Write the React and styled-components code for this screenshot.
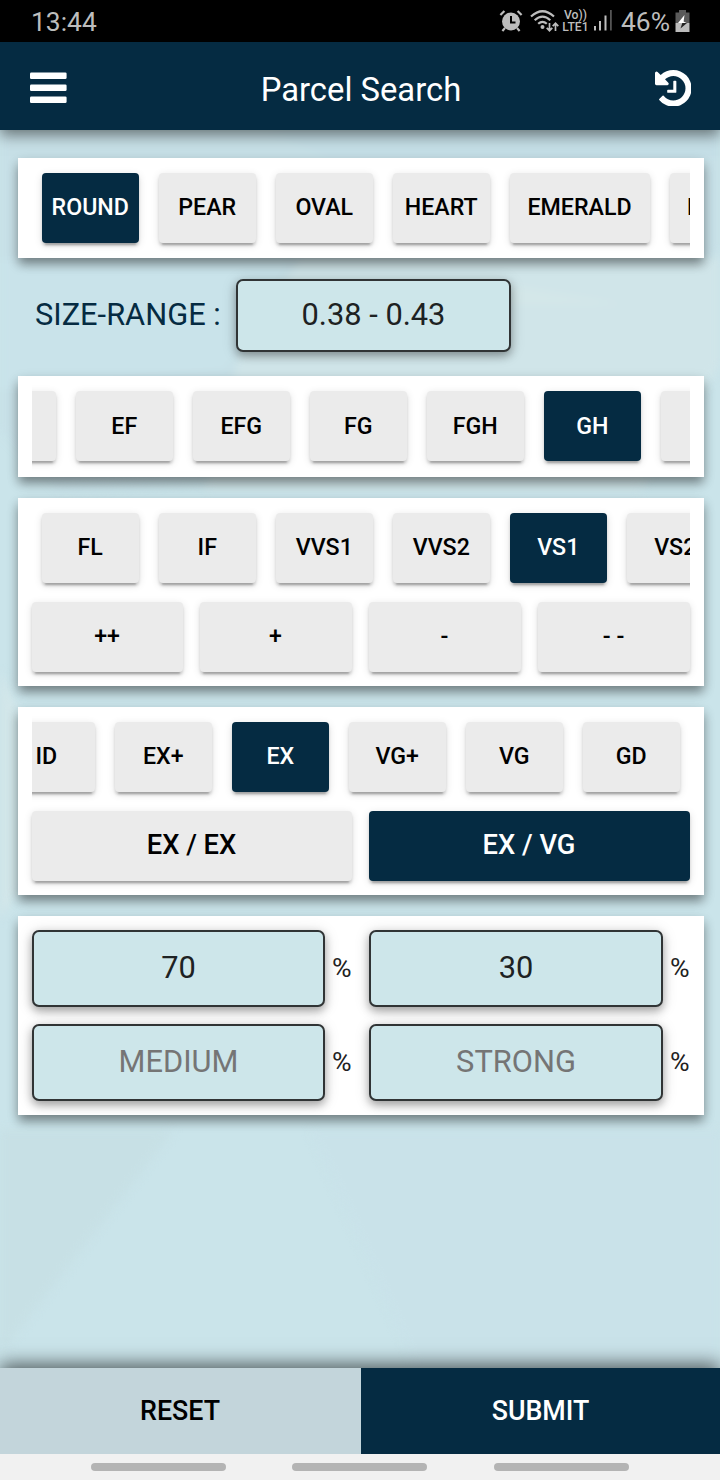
import React, { useState } from "react";
import styled, { createGlobalStyle } from "styled-components";

const NAVY = "#052b42";

const SHAPES = ["ROUND", "PEAR", "OVAL", "HEART", "EMERALD", "PRINCESS"];
const COLORS = ["", "EF", "EFG", "FG", "FGH", "GH", ""];
const CLARITIES = ["FL", "IF", "VVS1", "VVS2", "VS1", "VS2"];
const SHADES = ["++", "+", "-", "- -"];
const CUTS = ["ID", "EX+", "EX", "VG+", "VG", "GD"];
const FINISHES = ["EX / EX", "EX / VG"];

function ChipRow({ items, value, onSelect, shift = 10, drop = 2 }) {
  return (
    <Scroller $shift={shift}>
      {items.map((item, i) => (
        <Chip
          key={i}
          $wide={item.length > 5}
          $drop={drop}
          $active={item !== "" && item === value}
          onClick={() => onSelect(item)}
        >
          {item}
        </Chip>
      ))}
    </Scroller>
  );
}

function ButtonGrid({ items, value, onSelect, columns, large }) {
  return (
    <Grid $columns={columns}>
      {items.map((item) => (
        <WideButton
          key={item}
          $large={large}
          $active={item === value}
          onClick={() => onSelect(item)}
        >
          {item}
        </WideButton>
      ))}
    </Grid>
  );
}

function PercentField({ placeholder, defaultValue }) {
  return (
    <Field>
      <Input placeholder={placeholder} defaultValue={defaultValue} />
      <Percent>%</Percent>
    </Field>
  );
}

function StatusBar() {
  return (
    <Status>
      <Clock>13:44</Clock>
      <StatusIcons>
        <svg width="24" height="24" viewBox="0 0 24 24">
          <circle cx="12" cy="12.5" r="9" fill="#bdbdbd" />
          <path
            d="M1.4 6 5.4 2M22.6 6 18.600 2M6 19 3.400 22M18 19l2.600 3"
            stroke="#bdbdbd"
            strokeWidth="2.200"
            fill="none"
          />
          <path
            d="M12 7v6.500h4.500"
            stroke="#000"
            strokeWidth="2"
            fill="none"
          />
        </svg>
        <WifiIcon width="30" height="24" viewBox="0 0 30 24">
          <g fill="none" stroke="#bdbdbd" strokeWidth="2.200">
            <path d="M1 7.500Q12.500-3 24 7.500" />
            <path d="M4.700 11.300Q12.500 4 20.300 11.300" />
            <path d="M8.200 14.800Q12.500 10.800 16.800 14.800" />
          </g>
          <circle cx="12.500" cy="18" r="2" fill="#bdbdbd" />
          <path
            d="M19.500 14v7.500M16.700 18.800l2.800 2.900 2.800-2.900M25.500 22v-7.500M22.700 17.200l2.800-2.900 2.800 2.900"
            fill="none"
            stroke="#bdbdbd"
            strokeWidth="1.700"
          />
        </WifiIcon>
        <Volte>
          <span>Vo))</span>
          <span>LTE1</span>
        </Volte>
        <SignalIcon width="20" height="22" viewBox="0 0 20 22">
          <g fill="#bdbdbd">
            <path d="M1 16h2v4.500H1zM6 11h2v9.500H6zM11.500 5.500h2v15h-2z" />
            <path d="M17 0h1.800v20.500H17z" fill="#555" />
          </g>
        </SignalIcon>
        <Battery>46%</Battery>
        <svg width="15" height="23" viewBox="0 0 15 23">
          <path d="M4 0h7v2.500h3.500V13H.5V2.500H4z" fill="#5a5a5a" />
          <path d="M.5 13h14v9H.5z" fill="#bdbdbd" />
          <path d="M9.500 5 3 13h8.500L8.600 11.500z" fill="#fff" />
          <path d="M3 13h4.300l-1.800 5.500L12 13z" fill="#222" />
        </svg>
      </StatusIcons>
    </Status>
  );
}

function App() {
  const [shape, setShape] = useState("ROUND");
  const [color, setColor] = useState("GH");
  const [clarity, setClarity] = useState("VS1");
  const [shade, setShade] = useState(null);
  const [cut, setCut] = useState("EX");
  const [finish, setFinish] = useState("EX / VG");

  return (
    <Page>
      <GlobalStyle />
      <StatusBar />
      <Header>
        <svg width="37" height="32" viewBox="0 0 37 32" fill="#fff">
          <rect y="0.500" width="36.600" height="6.600" rx="1.300" />
          <rect y="12.500" width="36.600" height="6.600" rx="1.300" />
          <rect y="24.500" width="36.600" height="6.600" rx="1.300" />
        </svg>
        <Title>Parcel Search</Title>
        <svg width="36.600" height="36.600" viewBox="0 128 1536 1536" fill="#fff">
          <path d="M1536 896q0 156-61 298t-164 245-245 164-298 61q-172 0-327-72.500t-264-204.500q-7-10-6.500-22.500t8.500-20.500l137-138q10-9 25-9 16 2 23 12 73 95 179 147t225 52q104 0 198.500-40.500t163.500-109.500 109.500-163.500 40.500-198.500-40.500-198.500-109.500-163.500-163.500-109.500-198.500-40.500q-98 0-188 35.500t-160 101.500l137 138q31 30 14 69-17 40-59 40h-448q-26 0-45-19t-19-45v-448q0-42 40-59 39-17 69 14l130 129q107-101 244.500-156.500t284.500-55.500q156 0 298 61t245 164 164 245 61 298zm-640-288v448q0 14-9 23t-23 9h-320q-14 0-23-9t-9-23v-64q0-14 9-23t23-9h224v-352q0-14 9-23t23-9h64q14 0 23 9t9 23z" />
        </svg>
      </Header>
      <Content>
        <Facets viewBox="0 0 720 1238" preserveAspectRatio="none">
          <path d="M0 0h720v120L500 360 230 350 60 360 0 300z" fill="#c7e0e7" />
          <path d="M265 0 330 28H720V0z" fill="#c5dfe7" />
          <path d="M300 128H720V235L640 360H205L240 222z" fill="#d0e5e9" />
          <path d="M480 150 625 175H500z" fill="#d4e7e9" />
          <path d="M0 130h290L225 240 0 260z" fill="#c9e3ea" />
          <path d="M110 326 230 312H460L300 320z" fill="#d6dfd2" />
          <path d="M0 540 18 580V760L0 790z" fill="#d2e6e9" />
          <path d="M0 1000H174L0 1225z" fill="#c7e0e5" />
          <path d="M310 1000 415 1238H720V1000z" fill="#c9e2e9" />
        </Facets>
        <Panel>
          <ChipRow items={SHAPES} value={shape} onSelect={setShape} />
        </Panel>
        <SizeRange>
          <SizeLabel>SIZE-RANGE :</SizeLabel>
          <SizeBox>0.38 - 0.43</SizeBox>
        </SizeRange>
        <Panel $height={101}>
          <ChipRow
            items={COLORS}
            value={color}
            onSelect={setColor}
            shift={-73}
            drop={0}
          />
        </Panel>
        <Panel $height={188}>
          <ChipRow items={CLARITIES} value={clarity} onSelect={setClarity} />
          <ButtonGrid
            items={SHADES}
            value={shade}
            onSelect={setShade}
            columns="151px repeat(3, 152px)"
          />
        </Panel>
        <Panel $height={188}>
          <ChipRow items={CUTS} value={cut} onSelect={setCut} shift={-34} />
          <ButtonGrid
            items={FINISHES}
            value={finish}
            onSelect={setFinish}
            columns="320px 321px"
            large
          />
        </Panel>
        <Panel $height={199}>
          <Fields>
            <PercentField defaultValue="70" />
            <PercentField defaultValue="30" />
            <PercentField placeholder="MEDIUM" />
            <PercentField placeholder="STRONG" />
          </Fields>
        </Panel>
      </Content>
      <Footer>
        <FooterButton>RESET</FooterButton>
        <FooterButton $primary>SUBMIT</FooterButton>
      </Footer>
      <NavBar>
        <NavPill />
        <NavPill />
        <NavPill />
      </NavBar>
    </Page>
  );
}

export default App;

const GlobalStyle = createGlobalStyle`
  * {
    box-sizing: border-box;
  }

  body {
    margin: 0;
    font-family: Roboto, "Liberation Sans", sans-serif;
  }

  button, input {
    font-family: inherit;
    border: none;
    padding: 0;
    margin: 0;
  }
`;

const Page = styled.div`
  display: flex;
  flex-direction: column;
  width: 720px;
  height: 1480px;
  overflow: hidden;
  background-color: #cae4ea;
`;

const Status = styled.div`
  display: flex;
  justify-content: space-between;
  align-items: center;
  height: 42px;
  padding: 0 30px 0 31px;
  background-color: #000;
  color: #bdbdbd;
`;

const Clock = styled.span`
  font-size: 26.400px;
  line-height: 42px;
  padding-top: 2px;
`;

const StatusIcons = styled.div`
  display: flex;
  align-items: center;
`;

const WifiIcon = styled.svg`
  margin-left: 7px;
`;

const SignalIcon = styled.svg`
  margin-left: 4px;
`;

const Volte = styled.div`
  display: flex;
  flex-direction: column;
  width: 27px;
  margin-left: 2px;
  font-size: 12.200px;
  font-weight: 500;
  line-height: 12.500px;
  text-align: center;
  white-space: nowrap;
`;

const Battery = styled.span`
  width: 50px;
  margin: 2px 4px 0 8px;
  font-size: 26.400px;
`;

const Header = styled.header`
  position: relative;
  z-index: 1;
  display: flex;
  justify-content: space-between;
  align-items: center;
  height: 88px;
  padding: 4px 28.500px 0 30px;
  background-color: ${NAVY};
  color: #fff;
  box-shadow: 0 5px 14px rgba(0, 0, 0, 0.5);
`;

const Title = styled.h1`
  margin: 0;
  padding-top: 3px;
  font-size: 32.800px;
  font-weight: 400;
`;

const Content = styled.main`
  position: relative;
  display: flex;
  flex-direction: column;
  gap: 21px;
  height: 1238px;
  padding: 28px 16px 0 18px;
`;

/* soft gem facets behind the form */
const Facets = styled.svg`
  position: absolute;
  top: 0;
  left: 0;
  width: 720px;
  height: 1238px;
  filter: blur(4px);
`;

const Panel = styled.section`
  position: relative;
  height: ${(props) => props.$height || 100}px;
  padding: 0 14px;
  background-color: #fff;
  box-shadow: 0 7px 10px -1px rgba(0, 0, 0, 0.36),
    0 4px 12px rgba(0, 0, 0, 0.14);
`;

const Scroller = styled.div`
  display: flex;
  gap: 20px;
  height: 100px;
  padding: 15px 0;
  overflow: hidden;

  & > :first-child {
    margin-left: ${(props) => props.$shift}px;
  }
`;

const Button = styled.button`
  height: 70px;
  border-radius: 4px;
  background-color: ${(props) => (props.$active ? NAVY : "#ebebeb")};
  color: ${(props) => (props.$active ? "#fff" : "#000")};
  font-size: 23.200px;
  font-weight: 500;
  box-shadow: 0 5px 2px -3px rgba(0, 0, 0, 0.2),
    0 3px 3px 0 rgba(0, 0, 0, 0.14), 0 2px 8px 0 rgba(0, 0, 0, 0.12);
`;

const Chip = styled(Button)`
  flex: none;
  min-width: ${(props) => (props.$wide ? 140 : 97)}px;
  padding: 0 ${(props) => (props.$wide ? 18 : 8.5)}px
    ${(props) => props.$drop}px ${(props) => (props.$wide ? 17 : 8)}px;
`;

const Grid = styled.div`
  display: grid;
  grid-template-columns: ${(props) => props.$columns};
  gap: 17px;
  margin-top: 4px;
`;

const WideButton = styled(Button)`
  padding: 0 1px 3px 0;
  font-size: ${(props) => (props.$large ? 27.300 : 23.200)}px;
`;

const SizeRange = styled.div`
  position: relative;
  display: flex;
  align-items: center;
  gap: 15px;
  height: 73px;
  margin-bottom: 3px;
  padding-left: 17px;
`;

const SizeLabel = styled.label`
  width: 186px;
  padding-bottom: 3px;
  color: ${NAVY};
  font-size: 30.800px;
  white-space: nowrap;
`;

const boxShadow = "0 4px 8px rgba(0, 0, 0, 0.3), 0 2px 16px rgba(0, 0, 0, 0.14)";

const SizeBox = styled.div`
  width: 275px;
  height: 73px;
  border: 2px solid #303435;
  border-radius: 7px;
  background-color: #cde6ea;
  color: #1d2223;
  font-size: 30.800px;
  line-height: 67px;
  text-align: center;
  box-shadow: ${boxShadow};
`;

const Fields = styled.div`
  display: grid;
  grid-template-columns: 320px 321px;
  gap: 17px;
  padding-top: 14px;
`;

const Field = styled.div`
  display: flex;
  align-items: center;
  gap: 7px;
`;

const Input = styled.input`
  flex: 1;
  min-width: 0;
  height: 77px;
  padding-bottom: 2px;
  border: 2px solid #303435;
  border-radius: 7px;
  background-color: #cde6ea;
  color: #1d2223;
  font-size: 30.800px;
  text-align: center;
  box-shadow: ${boxShadow};

  &::placeholder {
    color: #757575;
    opacity: 1;
  }
`;

const Percent = styled.span`
  width: 20px;
  padding-bottom: 2px;
  color: #222;
  font-size: 26.700px;
`;

const Footer = styled.footer`
  position: relative;
  display: flex;
  height: 86px;
  box-shadow: 0 -4px 18px rgba(0, 0, 0, 0.6);
`;

const FooterButton = styled.button`
  width: ${(props) => (props.$primary ? 359 : 361)}px;
  padding-right: ${(props) => (props.$primary ? 0 : 1)}px;
  background-color: ${(props) => (props.$primary ? NAVY : "#c3d5db")};
  color: ${(props) => (props.$primary ? "#fff" : "#000")};
  font-size: 26.800px;
  font-weight: 500;
`;

const NavBar = styled.nav`
  position: relative;
  display: flex;
  gap: 66.400px;
  height: 26px;
  padding: 9px 0 0 91px;
  background-color: #f1f1f1;
`;

const NavPill = styled.span`
  width: 135px;
  height: 8px;
  border-radius: 4px;
  background-color: #b4b4b4;
`;
